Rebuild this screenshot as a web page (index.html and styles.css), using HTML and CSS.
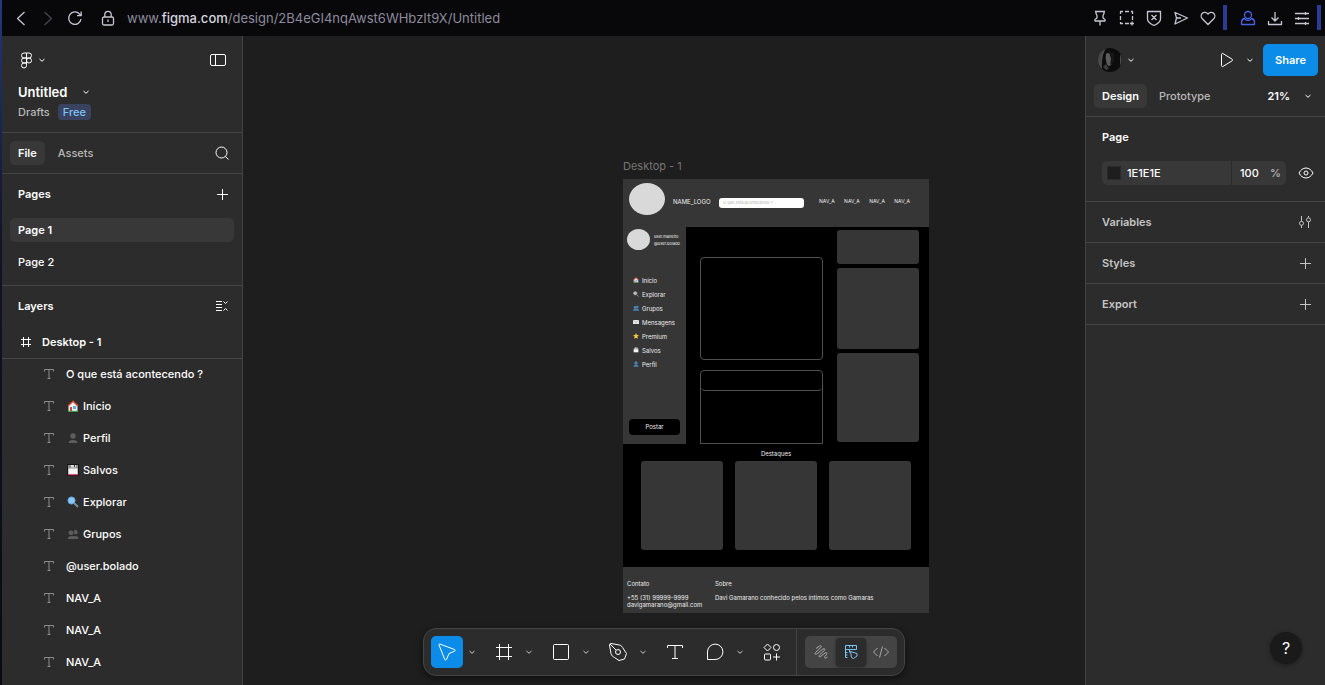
FILE: index.html
```html
<!DOCTYPE html>
<html lang="en">
<head>
<meta charset="utf-8">
<title>Untitled</title>
<link rel="stylesheet" href="styles.css">
</head>
<body>
<svg class="defs" aria-hidden="true">
  <symbol id="chev" viewBox="0 0 8 8"><path d="M1.5 3 4 5.300 6.500 3"/></symbol>
  <symbol id="text" viewBox="0 0 12 12"><path d="M1.500 3.500v-2h9v2M6 1.500v9M4.500 10.500h3"/></symbol>
  <symbol id="plus" viewBox="0 0 12 12"><path d="M6.500 1v11M1 6.500h11"/></symbol>
  <symbol id="house" viewBox="0 0 12 12"><path d="M1.500 5 6 1l4.500 4v6h-9z" fill="#f0f0f0"/><path d="M.5 5.500 6 .3l5.500 5.200-1 1L6 2.300l-4.500 4.200z" fill="#d3452f"/><path d="M3 7h2v4H3z" fill="#d3452f"/><path d="M6 6h3v3H6z" fill="#51b5e8"/><path d="M1 10.800h10V12H1z" fill="#3f9b45"/></symbol>
  <symbol id="person" viewBox="0 0 12 12"><circle cx="6" cy="4" r="3.300"/><path d="M1 11.500c0-3 2-4 5-4s5 1 5 4z"/></symbol>
  <symbol id="people" viewBox="0 0 12 12"><circle cx="8.500" cy="4.200" r="2.700"/><circle cx="4" cy="4.800" r="2.900"/><path d="M.3 11.500c0-3 1.500-3.800 4-3.800h4c3 0 3.500.8 3.500 3.800z"/></symbol>
  <symbol id="disk" viewBox="0 0 12 12"><path d="M0 0h12v12H0z" fill="#161616"/><path d="M1 1h10v10H1z" fill="#8d8d8d"/><path d="M1.500 4.500h9v6h-9z" fill="#f4f4f4"/><path d="M4 1h5v2.500H4z" fill="#ddd"/><path d="M7 1h1v2H7z" fill="#333"/><path d="M1 10h10v1.200H1z" fill="#e0457b"/></symbol>
  <symbol id="lens" viewBox="0 0 12 12"><path d="m7 7 4 4" stroke="#7b8b98" stroke-width="2"/><circle cx="4.500" cy="4.500" r="3.600" fill="#8cc7f5" stroke="#5d9fd3"/></symbol>
  <symbol id="mail" viewBox="0 0 12 12"><path d="M0 2h12v8H0z" fill="#e6e6e6"/><path d="m0 2 6 5 6-5" fill="none" stroke="#999"/></symbol>
  <symbol id="star" viewBox="0 0 12 12"><path d="m6 0 1.800 4 4.200.4-3.200 2.800 1 4.300L6 9.300l-3.800 2.200 1-4.300L0 4.400 4.200 4z" fill="#fcc93c"/></symbol>
</svg>

<header class="browser">
  <nav class="browser-nav">
    <button aria-label="Back"><svg class="ic" width="16" height="16"><path d="M11.500 2 4.500 8.500l7 6.500"/></svg></button>
    <button aria-label="Forward" class="off"><svg class="ic" width="16" height="16"><path d="m4.500 2 7 6.500-7 6.500"/></svg></button>
    <button aria-label="Reload"><svg class="ic" width="16" height="16"><path d="M14 9.200A6.200 6.200 0 1 1 12.500 4l1.500 1.500M14.200 1.500v4.200H10"/></svg></button>
    <svg class="ic lock" width="14" height="16"><rect x="1.500" y="7" width="11" height="8" rx="1.500"/><path d="M3.800 7V4.500a3.200 3.200 0 0 1 6.400 0V7M7 9.500V12"/></svg>
  </nav>
  <span class="url">www.<b>figma.com</b>/design/2B4eGI4nqAwst6WHbzIt9X/Untitled</span>
  <nav class="browser-tools">
    <button aria-label="Pin"><svg class="ic" width="16" height="16"><path d="M3 1.500h10M4 1.500v2l1 2v2.500l-2 1.500v1.500h10V9.500L11 8V5.500l1-2v-2M8 11v4.500"/></svg></button>
    <button aria-label="Snapshot"><svg class="ic" width="16" height="16"><path d="M1.500 4V1.500H4M6 1.500h4M12 1.500h1.500V4M13.500 6v4M1.500 6v4M1.500 12v1.500H4M6 13.500h4M13 11.500v4M11 13.500h4"/></svg></button>
    <button aria-label="Ad blocker"><svg class="ic" width="16" height="16"><path d="M1.500 1.500h13V9c0 3.500-3 5-6.500 6.500C4.500 14 1.500 12.500 1.500 9zM5.500 5l5 5M10.500 5l-5 5"/></svg></button>
    <button aria-label="Flow"><svg class="ic" width="16" height="16"><path d="M2 2.500 14.500 8 2 14l1.500-6zM3.500 8H8"/></svg></button>
    <button aria-label="Favourite"><svg class="ic" width="16" height="16"><path d="M8 14.500 2.300 8.800a3.900 3.900 0 0 1 0-5.500 3.700 3.700 0 0 1 5.700.8 3.700 3.700 0 0 1 5.700-.8 3.900 3.900 0 0 1 0 5.500z"/></svg></button>
    <i class="strip"></i>
    <button aria-label="Profile" class="profile"><svg class="ic" width="16" height="16"><circle cx="8" cy="5" r="3.500"/><path d="M4.500 8.500c-2 .5-3 2-3 4v2h13v-2c0-2-1-3.500-3-4-.5 1-2 2-3.500 2s-3-1-3.500-2z"/></svg></button>
    <button aria-label="Downloads"><svg class="ic" width="16" height="16"><path d="M8 2v9M4.500 7.500 8 11l3.500-3.500M1.500 11v3.500h13V11"/></svg></button>
    <button aria-label="Setup"><svg class="ic" width="16" height="16"><path d="M1 3.500h14M1 8.500h14M1 13.500h14M11.500 2v3M4.500 7v3M11.500 12v3"/></svg></button>
    <i class="strip"></i>
  </nav>
</header>

<div class="workspace">
  <aside class="left">
    <section class="file-head">
      <div class="row tall">
        <button aria-label="Main menu" class="menu"><svg class="ic" width="13" height="17"><path d="M6.500 1H4a2.500 2.500 0 0 0 0 5h2.500zM6.500 1H9a2.500 2.500 0 0 1 0 5H6.500zM6.500 6H4a2.500 2.500 0 0 0 0 5h2.500zM6.500 11H4a2.500 2.500 0 1 0 2.500 2.500z"/><circle cx="9" cy="8.500" r="2.500"/></svg><svg class="ic chev"><use href="#chev"/></svg></button>
        <button aria-label="Minimize UI"><svg class="ic" width="16" height="13"><rect x=".5" y=".5" width="15" height="11" rx="1.500"/><path d="M5.500.500v11"/></svg></button>
      </div>
      <button class="title">Untitled<svg class="ic chev"><use href="#chev"/></svg></button>
      <div class="drafts"><a href="#">Drafts</a><span class="free">Free</span></div>
    </section>
    <section class="row tabs">
      <div><button class="tab on">File</button><button class="tab">Assets</button></div>
      <button class="act" aria-label="Search"><svg class="ic" width="14" height="14"><circle cx="6.500" cy="6.500" r="5.500"/><path d="m10.500 10.500 3 3"/></svg></button>
    </section>
    <section class="pages">
      <div class="row"><h2>Pages</h2><button class="act" aria-label="Add page"><svg class="ic" width="12" height="12"><use href="#plus"/></svg></button></div>
      <ul><li><button class="page on">Page 1</button></li><li><button class="page">Page 2</button></li></ul>
    </section>
    <section class="layers">
      <div class="row"><h2>Layers</h2><button class="act" aria-label="Collapse layers"><svg class="ic" width="12" height="12"><path d="M0 1.500h6M0 4.500h6M0 7.500h6M0 10.500h6M7.500 1.500l2 2 2-2M7.500 10.500l2-2 2 2"/></svg></button></div>
      <div class="frame"><svg class="ic" width="12" height="12"><path d="M3.500 1v10M8.500 1v10M1 3.500h10M1 8.500h10"/></svg>Desktop - 1</div>
      <ul>
        <li><svg class="ic t"><use href="#text"/></svg>O que está acontecendo ?</li>
        <li><svg class="ic t"><use href="#text"/></svg><svg class="emo"><use href="#house"/></svg>Início</li>
        <li><svg class="ic t"><use href="#text"/></svg><svg class="emo dim"><use href="#person"/></svg>Perfil</li>
        <li><svg class="ic t"><use href="#text"/></svg><svg class="emo"><use href="#disk"/></svg>Salvos</li>
        <li><svg class="ic t"><use href="#text"/></svg><svg class="emo"><use href="#lens"/></svg>Explorar</li>
        <li><svg class="ic t"><use href="#text"/></svg><svg class="emo dim"><use href="#people"/></svg>Grupos</li>
        <li><svg class="ic t"><use href="#text"/></svg>@user.bolado</li>
        <li><svg class="ic t"><use href="#text"/></svg>NAV_A</li>
        <li><svg class="ic t"><use href="#text"/></svg>NAV_A</li>
        <li><svg class="ic t"><use href="#text"/></svg>NAV_A</li>
      </ul>
    </section>
  </aside>

  <main class="canvas">
    <div class="board-wrap">
      <div class="board-label">Desktop - 1</div>
      <article class="board">
        <div class="b-head">
          <i class="blob"></i><span class="b-name">NAME_LOGO</span><span class="b-search">O que está acontecendo ?</span>
          <div class="b-nav"><span>NAV_A</span><span>NAV_A</span><span>NAV_A</span><span>NAV_A</span></div>
        </div>
        <div class="b-body">
          <div class="b-side">
            <div class="b-user"><i class="blob small"></i><div>user.maneiro<br>@user.bolado</div></div>
            <ul>
              <li><svg><use href="#house"/></svg>Início</li>
              <li><svg class="grey"><use href="#lens"/></svg>Explorar</li>
              <li><svg class="blue"><use href="#people"/></svg>Grupos</li>
              <li><svg><use href="#mail"/></svg>Mensagens</li>
              <li><svg><use href="#star"/></svg>Premium</li>
              <li><svg class="grey"><use href="#disk"/></svg>Salvos</li>
              <li><svg class="blue"><use href="#person"/></svg>Perfil</li>
            </ul>
            <div class="b-post">Postar</div>
          </div>
          <div class="b-feed"><div class="post"></div><div class="post next"><i></i></div></div>
          <div class="b-cards"><i></i><i></i><i></i></div>
        </div>
        <div class="b-top">Destaques</div>
        <div class="b-row"><i></i><i></i><i></i></div>
        <div class="b-foot">
          <div><h3>Contato</h3><p>+55 (31) 99999-9999<br>davigamarano@gmail.com</p></div>
          <div><h3>Sobre</h3><p>Davi Gamarano conhecido pelos íntimos como Gamaras</p></div>
        </div>
      </article>
    </div>

    <div class="toolbar">
      <div class="tools">
        <button class="tool active" aria-label="Move"><svg class="ic" width="18" height="18"><path d="M1.800 1 16.500 6.500c1 .4 1 1.300 0 1.700L11 10.500l-2.500 6c-.4.900-1.300.9-1.700 0L1 2c-.2-.7.2-1.200.8-1z"/></svg></button>
        <button class="drop" aria-label="Move options"><svg class="ic chev"><use href="#chev"/></svg></button>
        <button class="tool" aria-label="Frame"><svg class="ic" width="18" height="18"><path d="M4.500 1v16M13.500 1v16M1 4.500h16M1 13.500h16"/></svg></button>
        <button class="drop" aria-label="Frame options"><svg class="ic chev"><use href="#chev"/></svg></button>
        <button class="tool" aria-label="Rectangle"><svg class="ic" width="18" height="18"><rect x="1.500" y="1.500" width="15" height="15" rx="1"/></svg></button>
        <button class="drop" aria-label="Shape options"><svg class="ic chev"><use href="#chev"/></svg></button>
        <button class="tool" aria-label="Pen"><svg class="ic" width="20" height="20"><path d="M1.500 3c0-1 .5-1.500 1.500-1.500l8.500 1.500c2 .5 3 2 4 4l3 4.500-2 5.500-5.500 1.500-4.500-3c-2-1-3-2-3.500-4zM2 2l6 6"/><circle cx="10" cy="10" r="2.500"/></svg></button>
        <button class="drop" aria-label="Pen options"><svg class="ic chev"><use href="#chev"/></svg></button>
        <button class="tool" aria-label="Text"><svg class="ic" width="18" height="18"><path d="M1.500 5V2.500h15V5M9 2.500v13M6 15.500h6"/></svg></button>
        <button class="tool gap" aria-label="Comment"><svg class="ic" width="18" height="18"><path d="M1.500 16.500V9A7.700 7.700 0 1 1 9 16.500z"/></svg></button>
        <button class="drop" aria-label="Comment options"><svg class="ic chev"><use href="#chev"/></svg></button>
        <button class="tool" aria-label="Actions"><svg class="ic" width="18" height="18"><path d="m4.500 1 3.500 3.500L4.500 8 1 4.500zM13.500 10.500v7M10 14h7"/><circle cx="13.500" cy="4.500" r="3"/><rect x="1.500" y="11" width="6" height="6" rx="1"/></svg></button>
      </div>
      <div class="modes">
        <div class="switch">
          <button aria-label="Draw"><svg class="ic" width="16" height="16"><path d="M3 4.500 6.500 2c1.500-1 2.500.3 1.300 1.500L2.500 8.500c-1.200 1.200-.2 2.500 1.200 1.500L10 5c1.500-1 2.500.3 1.300 1.500L6.500 11c-1.200 1.200-.2 2.500 1.200 1.500L12 9c1.500-1 2.500.2 1.500 1.500l-1.700 2c-.8 1.200.2 2 1.400 1.300l1.300-.8"/></svg></button>
          <button aria-label="Design" class="on"><svg class="ic" width="16" height="16"><path d="M4.500 13.500h-2v-12h11v4h-7M6.500 1.500v2M9.500 1.500v2M2.500 5.500h4v3M2.500 8.500h2M2.500 11h2M7.500 7.500l6.500 2v2.500l-3.500 2.500-2-1z"/></svg></button>
          <button aria-label="Dev Mode"><svg class="ic" width="16" height="16"><path d="m4.500 4-4 4 4 4M11.500 4l4 4-4 4M9.500 2.500l-3 11"/></svg></button>
        </div>
      </div>
    </div>
  </main>

  <aside class="right">
    <section class="share-head">
      <div class="row tall">
        <button class="menu" aria-label="Account"><svg class="avatar" viewBox="0 0 24 24"><circle cx="12" cy="12" r="12" fill="#0c0c0c"/><path d="M0 12A12 12 0 0 1 8 .7C4 6 4 14 4 20.900A12 12 0 0 1 0 12z" fill="#4a4a4a"/><path d="M8 6c2-2 5-1 6 4s-1 8-3 8-4-5-3-12z" fill="#5c5c5c"/><path d="m11 4 2 7-1 6 4-3V5z" fill="#161616"/><path d="m5 19 3-3 3 5-3 1z" fill="#3c3c3c"/><path d="M22 6a12 12 0 0 1 0 12z" fill="#4a4a4a"/></svg><svg class="ic chev"><use href="#chev"/></svg></button>
        <div class="row-end">
          <button aria-label="Present"><svg class="ic" width="14" height="16"><path d="M1.500 2.500c0-1 .7-1.400 1.500-.9l9 5.500c.8.500.8 1.300 0 1.800l-9 5.500c-.8.500-1.500 0-1.500-.9z"/></svg></button>
          <button aria-label="Present options"><svg class="ic chev"><use href="#chev"/></svg></button>
          <button class="share">Share</button>
        </div>
      </div>
      <div class="mode-tabs">
        <div><button class="tab on">Design</button><button class="tab">Prototype</button></div>
        <button class="zoom">21%<svg class="ic chev"><use href="#chev"/></svg></button>
      </div>
    </section>
    <section class="page-props">
      <h2>Page</h2>
      <div class="fill">
        <div class="field"><i class="swatch"></i><input class="hex" aria-label="Page color" value="1E1E1E"><label class="pct"><input aria-label="Opacity" value="100"><span>%</span></label></div>
        <button aria-label="Visibility"><svg class="ic" width="16" height="12"><path d="M1 6c1.500-3 4-5 7-5s5.500 2 7 5c-1.500 3-4 5-7 5S2.500 9 1 6z"/><circle cx="8" cy="6" r="2"/></svg></button>
      </div>
    </section>
    <section class="row prop"><h2>Variables</h2><button class="act" aria-label="Open variables"><svg class="ic" width="12" height="14"><path d="M2.500 1v5M2.500 10.500V13M9.500 1v1.500M9.500 7v6"/><circle cx="2.500" cy="8.300" r="2"/><circle cx="9.500" cy="4.800" r="2"/></svg></button></section>
    <section class="row prop"><h2>Styles</h2><button class="act" aria-label="Add style"><svg class="ic" width="12" height="12"><use href="#plus"/></svg></button></section>
    <section class="row prop"><h2>Export</h2><button class="act" aria-label="Add export"><svg class="ic" width="12" height="12"><use href="#plus"/></svg></button></section>
    <button class="help" aria-label="Help">?</button>
  </aside>
</div>
</body>
</html>
```
FILE: styles.css
```css
* { box-sizing: border-box; }
body {
  margin: 0;
  height: 100vh;
  display: flex;
  flex-direction: column;
  overflow: hidden;
  border-left: 2px solid;
  border-image: linear-gradient(#26387c, #10132a 35%, #0a0a10) 1;
  background: #1e1e1e;
  color: #fff;
  font: 500 11px/16px Inter, sans-serif;
}
button, input { font: inherit; color: inherit; background: none; border: 0; padding: 0; margin: 0; }
button { display: inline-flex; align-items: center; justify-content: center; }
ul { list-style: none; margin: 0; padding: 0; }
h2 { margin: 0; font: inherit; font-weight: 600; }
a { color: inherit; text-decoration: none; }
svg { flex: none; }
.defs { position: absolute; width: 0; height: 0; }
.ic { fill: none; stroke: currentColor; stroke-linejoin: round; overflow: visible; }
.chev { width: 8px; height: 8px; }

/* Browser bar */
.browser { flex: none; height: 36px; padding-bottom: 1px; display: flex; align-items: center; background: #08080b; color: #c6c6d0; }
.browser .ic { stroke-width: 1.3; }
.browser-nav { display: flex; align-items: center; gap: 11px; padding-left: 11px; }
.browser-nav .off { color: #45454c; }
.browser-nav .lock { margin-left: 7px; }
.url { flex: 1; padding-left: 12px; font: 400 13px/20px Inter, sans-serif; color: #8d8b9b; }
.url b { font-weight: 500; color: #d6d5de; }
.browser-tools { display: flex; align-items: center; gap: 11px; padding-right: 6px; }
.browser-tools .profile { color: #4a62ea; }
.strip { width: 4px; height: 25px; margin: 0 -2px 0 -4px; background: #2b3c94; }
.profile { margin-left: 4px; }

/* Shared panel parts */
.workspace { flex: 1; min-height: 0; display: flex; }
.left, .right { flex: none; background: #2c2c2c; overflow: hidden; }
.left { width: 241px; border-right: 1px solid #444; }
.right { width: 240px; border-left: 1px solid #444; }
.left section, .right section { border-bottom: 1px solid #444; }
.row { display: flex; align-items: center; justify-content: space-between; min-height: 40px; padding: 0 8px 0 16px; }
.row.tall { min-height: 32px; }
.act { width: 24px; height: 24px; }
.menu { gap: 5px; }
.tab { height: 24px; padding: 0 8px; border-radius: 5px; color: #b8b8b8; }
.tab.on { background: #383838; color: #fff; font-weight: 600; }

/* Left panel */
.file-head { padding: 8px 0 12px; }
.file-head .row { padding: 0 16px 0 18px; }
.title { height: 24px; margin-top: 4px; padding-left: 16px; gap: 15px; font-size: 13px; font-weight: 600; }
.drafts { display: flex; gap: 8px; padding-left: 16px; color: #b8b8b8; }
.free { padding: 0 5px; border-radius: 4px; background: #394360; color: #7cc4f8; }
.row.tabs { min-height: 41px; padding-left: 8px; }
.tabs .tab + .tab { margin-left: 5px; }
.pages { padding-bottom: 7px; }
.pages li { padding: 4px 8px; }
.page { width: 100%; height: 24px; justify-content: flex-start; padding: 0 8px; border-radius: 5px; }
.page.on { background: #383838; font-weight: 600; }
.left .layers { border-bottom: 0; }
.frame { display: flex; align-items: center; gap: 10px; height: 32px; padding-left: 18px; font-weight: 600; box-shadow: 0 1px #444; }
.layers li { display: flex; align-items: center; height: 32px; padding-left: 41px; }
.t { width: 12px; height: 12px; margin-right: 11px; color: #8c8c8c; }
.emo { width: 12px; height: 12px; margin: 0 4px 0 1px; }
.dim { fill: #5c5c5c; stroke: #1c1c1c; stroke-width: .6; }

/* Canvas */
.canvas { flex: 1; position: relative; min-width: 0; background: #1e1e1e; overflow: hidden; }
.board-wrap { position: absolute; left: 380px; top: 122px; width: 306px; color: #eee; font-weight: 400; }
.board-label { color: #767676; font-size: 11px; height: 21px; }
.board { background: #000; font-size: 6px; line-height: 7px; }
.board i { display: block; }
.blob { width: 36px; height: 32px; border-radius: 50%; background: #d9d9d9; }
.blob.small { width: 23px; height: 21px; }
.b-head { display: flex; align-items: center; height: 48px; padding: 0 19px 8px 6px; background: #363636; }
.b-name { width: 54px; padding: 5px 0 0 8px; }
.b-search { width: 85px; height: 10px; margin-top: 7px; padding: 2px 4px; border-radius: 3px; background: #fff; color: #b0b0b0; font-size: 4px; line-height: 6px; }
.b-nav { flex: 1; display: flex; justify-content: space-between; padding: 5px 0 0 15px; font-size: 5px; }
.b-body { display: flex; height: 217px; }
.b-side { width: 63px; background: #363636; padding: 2px 6px 9px 4px; display: flex; flex-direction: column; }
.b-user { display: flex; gap: 4px; align-items: center; font-size: 4px; white-space: nowrap; }
.b-side ul { margin-top: 23px; padding-left: 6px; }
.b-side li { display: flex; align-items: center; gap: 3px; height: 14px; }
.b-side li svg { width: 6px; height: 6px; }
.b-side .grey { filter: grayscale(1); }
.b-side .blue { fill: #4b83b5; }
.b-post { margin: auto 0 0 2px; height: 16px; border-radius: 4px; background: #000; text-align: center; line-height: 16px; }
.b-feed { flex: 1; display: flex; flex-direction: column; gap: 10px; padding: 30px 14px 0; }
.post { height: 103px; border: 1px solid #505050; border-radius: 4px; }
.post.next { flex: 1; height: auto; border-radius: 4px 4px 0 0; }
.post.next i { height: 20px; border-bottom: 1px solid #505050; border-radius: 0 0 4px 4px; }
.b-cards { display: grid; grid-template-rows: 34px 81px 89px; gap: 4px; width: 92px; padding: 3px 10px 0 0; }
.b-cards i, .b-row i { background: #363636; border-radius: 3px; }
.b-top { padding: 6px 0 4px; text-align: center; }
.b-row { display: grid; grid-template-columns: repeat(3, 1fr); gap: 12px; height: 106px; padding: 0 18px 17px; }
.b-foot { display: flex; height: 46px; padding: 13px 4px 0; background: #363636; }
.b-foot > div { width: 88px; white-space: nowrap; }
.b-foot h3 { margin: 0 0 7px; font: inherit; }
.b-foot p { margin: 0; }

/* Toolbar */
.toolbar { position: absolute; left: 50%; bottom: 9px; transform: translateX(-50%); display: flex; height: 48px; border: 1px solid #444; border-radius: 13px; background: #2c2c2c; box-shadow: 0 2px 6px #0008; }
.tools { display: flex; align-items: center; padding: 0 8px 0 7px; }
.tool { width: 32px; height: 32px; border-radius: 5px; }
.tool.active { background: #0c8ce9; }
.drop { width: 17px; margin-right: 8px; color: #ccc; }
.tool.gap { margin-left: 8px; }
.modes { display: flex; align-items: center; padding: 0 7px 0 8px; border-left: 1px solid #444; }
.switch { display: flex; align-items: center; height: 32px; padding: 1px; border-radius: 5px; background: #444; color: #aaa; }
.switch button { width: 30px; height: 28px; border-radius: 4px; }
.switch .on { background: #2c2c2c; color: #7cc4f8; box-shadow: 0 1px 3px #0008; }

/* Right panel */
.right { position: relative; }
.share-head { padding: 8px 0; }
.share-head .row { padding: 0 7px 0 12px; }
.avatar { width: 24px; height: 24px; }
.row-end { display: flex; align-items: center; gap: 12px; }
.share { width: 55px; height: 32px; border-radius: 5px; background: #0c8ce9; font-weight: 600; margin-left: -3px; }
.mode-tabs { display: flex; justify-content: space-between; align-items: center; padding: 8px 13px 0 8px; }
.mode-tabs .tab + .tab { margin-left: 4px; }
.zoom { gap: 14px; font-weight: 600; }
.page-props { padding: 12px 11px 16px 16px; }
.fill { display: flex; align-items: center; justify-content: space-between; margin-top: 16px; }
.field { display: flex; align-items: center; width: 184px; height: 24px; border-radius: 5px; background: #383838; }
.swatch { width: 14px; height: 14px; margin: 0 6px 0 5px; background: #1e1e1e; border: 1px solid #2a2a2a; }
.hex { flex: 1; min-width: 0; height: 24px; }
.pct { display: flex; align-items: center; width: 55px; height: 24px; padding-left: 8px; border-left: 1px solid #2c2c2c; }
.pct input { width: 30px; }
.pct span { color: #b8b8b8; }
.prop { min-height: 41px; color: #c4c4c4; }
.help { position: absolute; right: 23px; bottom: 21px; width: 32px; height: 32px; border-radius: 50%; background: #1a1a1a; font-size: 16px; font-weight: 400; box-shadow: 0 1px 4px #0006; }
```
